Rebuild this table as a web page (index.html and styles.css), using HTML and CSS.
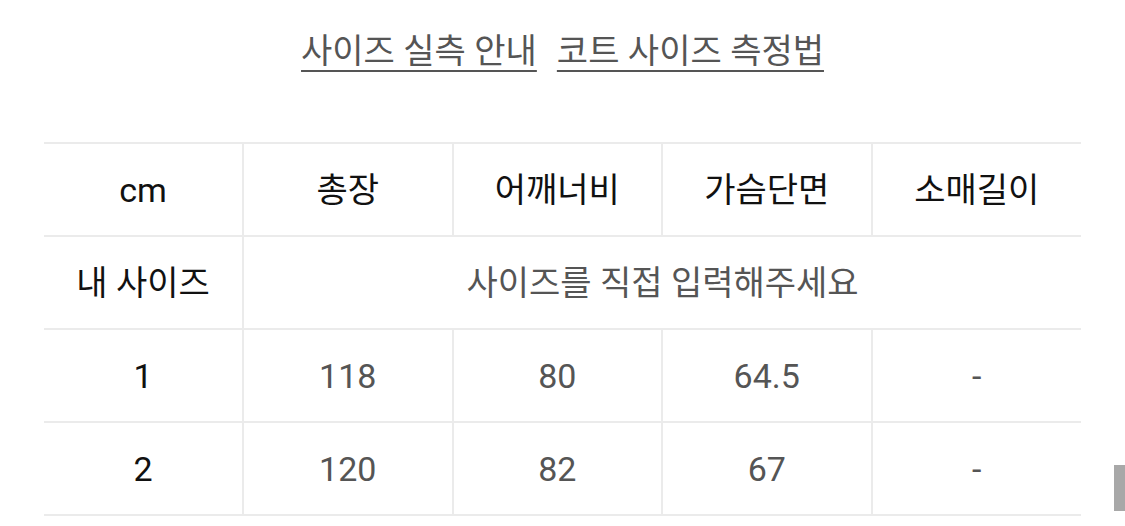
FILE: index.html
```html
<!DOCTYPE html>
<html lang="ko">
<head>
<meta charset="utf-8">
<link rel="stylesheet" href="styles.css">
</head>
<body>
<div class="page">
  <nav class="links">
    <a class="link" href="#">사이즈 실측 안내</a>
    <a class="link" href="#">코트 사이즈 측정법</a>
  </nav>
  <table class="size-table">
    <colgroup>
      <col class="col-first">
      <col class="col-data">
      <col class="col-data">
      <col class="col-data">
      <col class="col-data">
    </colgroup>
    <thead>
      <tr>
        <th>cm</th>
        <th>총장</th>
        <th>어깨너비</th>
        <th>가슴단면</th>
        <th>소매길이</th>
      </tr>
    </thead>
    <tbody>
      <tr>
        <th>내 사이즈</th>
        <td colspan="4">사이즈를 직접 입력해주세요</td>
      </tr>
      <tr>
        <th>1</th>
        <td>118</td>
        <td>80</td>
        <td>64.5</td>
        <td>-</td>
      </tr>
      <tr>
        <th>2</th>
        <td>120</td>
        <td>82</td>
        <td>67</td>
        <td>-</td>
      </tr>
    </tbody>
  </table>
</div>
<div class="scroll-thumb"></div>
</body>
</html>
```
FILE: styles.css
```css
html, body {
  margin: 0;
  padding: 0;
  background: #ffffff;
}
body {
  font-family: Roboto, "Noto Sans CJK KR", sans-serif;
  font-size: 34px;
  color: #555555;
  overflow: hidden;
}
.page {
  padding: 0 44px;
}
.links {
  display: flex;
  justify-content: center;
  gap: 20px;
  padding-top: 28px;
  height: 142px;
  box-sizing: border-box;
  line-height: 46px;
}
.link {
  color: #555555;
  text-decoration: underline;
  text-decoration-thickness: 2px;
  text-underline-offset: 7px;
  text-decoration-color: #555555;
}
.size-table {
  width: 100%;
  border-collapse: collapse;
  table-layout: fixed;
}
.col-first {
  width: 199px;
}
.size-table th,
.size-table td {
  height: 91px;
  padding: 0;
  text-align: center;
  vertical-align: middle;
  border-top: 2px solid #ebebeb;
  border-bottom: 2px solid #ebebeb;
  border-left: 2px solid #ebebeb;
  line-height: 40px;
}
.size-table tr > :first-child {
  border-left: none;
}
.size-table th {
  color: #111111;
  font-weight: 400;
}
.size-table td {
  color: #555555;
  font-weight: 400;
}
.scroll-thumb {
  position: fixed;
  right: 0;
  top: 465px;
  width: 11px;
  height: 46px;
  background: #a8a8a8;
}
```
